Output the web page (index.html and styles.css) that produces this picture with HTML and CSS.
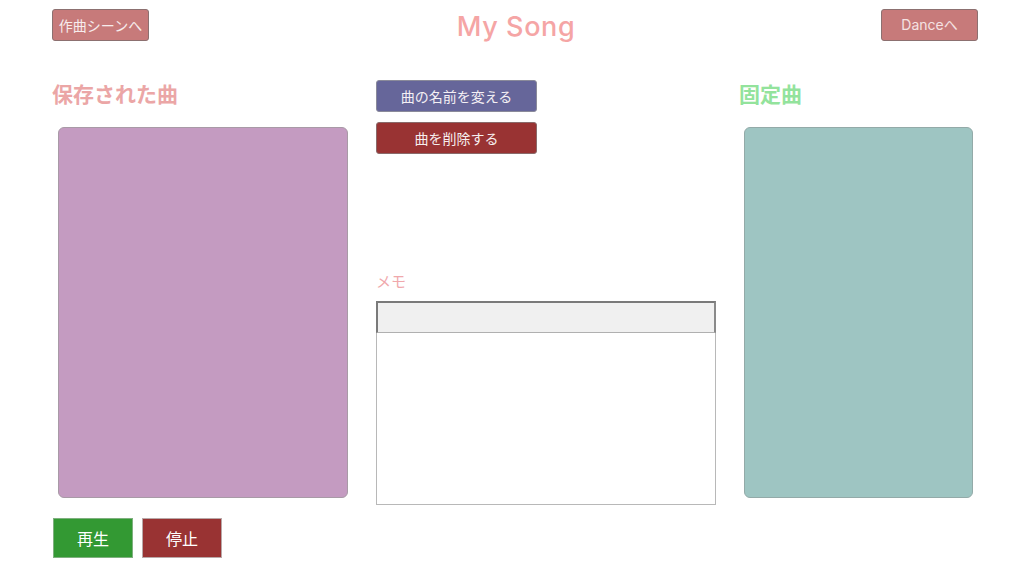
FILE: index.html
```html
<!DOCTYPE html>
<html lang="ja">
<head>
<meta charset="utf-8">
<title>My Song</title>
<link rel="stylesheet" href="styles.css">
</head>
<body>
<header class="topbar">
  <div class="topbar-left"><button class="nav-btn">作曲シーンへ</button></div>
  <h1 class="title">My Song</h1>
  <div class="topbar-right"><button class="nav-btn nav-latin">Danceへ</button></div>
</header>
<main class="layout">
  <section class="col col-saved">
    <h2 class="heading heading-pink">保存された曲</h2>
    <div class="panel panel-purple"></div>
    <div class="player">
      <button class="play-btn play">再生</button>
      <button class="play-btn stop">停止</button>
    </div>
  </section>
  <section class="col col-middle">
    <button class="action-btn rename">曲の名前を変える</button>
    <button class="action-btn delete">曲を削除する</button>
    <label class="memo-label">メモ</label>
    <input class="memo-input" type="text">
    <textarea class="memo-text"></textarea>
  </section>
  <section class="col col-fixed">
    <h2 class="heading heading-green">固定曲</h2>
    <div class="panel panel-teal"></div>
  </section>
</main>
</body>
</html>
```
FILE: styles.css
```css
* { box-sizing: border-box; }
html, body { margin: 0; padding: 0; background: #fff; }
body {
  font-family: "Noto Sans CJK JP", "Noto Sans", sans-serif;
  width: 1024px;
  height: 573px;
  overflow: hidden;
}
.topbar {
  display: grid;
  grid-template-columns: 1fr auto 1fr;
  align-items: start;
  padding: 9px 46px 0 52px;
  height: 41px;
}
.topbar-right { display: flex; justify-content: flex-end; }
.nav-btn {
  font-family: inherit;
  font-size: 14px;
  color: #f7ecec;
  background: #c77a7a;
  border: 1px solid #8c7070;
  border-radius: 3px;
  height: 32px;
  width: 97px;
  padding: 0;
  line-height: 30px;
}
.nav-latin { font-family: Inter, "Noto Sans CJK JP", sans-serif; font-size: 14px; color: #f5e2e2; }
.title {
  margin: 0;
  margin-left: 2px;
  font-family: Inter, "Noto Sans", sans-serif;
  font-size: 27px;
  font-weight: 500;
  color: #f5a5a5;
  line-height: 34px;
  margin-top: 1px;
  letter-spacing: 0.6px;
}
.layout {
  display: grid;
  grid-template-columns: 324px 363px 238px;
  padding-left: 52px;
  padding-top: 39px;
}
.col { display: flex; flex-direction: column; align-items: flex-start; }
.heading {
  margin: 1px 0 0 0;
  font-size: 21px;
  font-weight: 700;
  line-height: 24px;
}
.heading-pink { color: #eba6a6; }
.heading-green { color: #93e39c; }
.panel {
  border: 1px solid #a89aa6;
  border-radius: 6px;
  height: 371px;
  margin-top: 22px;
}
.panel-purple { background: #c49bc1; width: 290px; margin-left: 6px; }
.panel-teal { background: #9ec5c2; width: 229px; margin-left: 5px; border-color: #93aaa8; }
.player { display: flex; gap: 9px; margin-top: 20px; margin-left: 1px; }
.play-btn {
  font-family: inherit;
  font-size: 16px;
  color: #fff;
  width: 80px;
  height: 40px;
  border: 1px solid #b9a9a9;
  padding: 0;
}
.play { background: #339933; border-color: #7fb07f; }
.stop { background: #993333; }
.action-btn {
  font-family: inherit;
  font-size: 14px;
  color: #f4f0f4;
  width: 161px;
  height: 32px;
  border: 1px solid #8a8a9a;
  border-radius: 3px;
  padding: 0;
}
.rename { background: #66669a; }
.delete { background: #993333; margin-top: 10px; border-color: #8a6a6a; color: #f6eeee; }
.memo-label {
  margin-top: 116px;
  font-size: 15px;
  color: #f0a8ac;
  line-height: 22px;
}
.memo-input {
  margin-top: 9px;
  width: 340px;
  height: 32px;
  background: #f0f0f0;
  border-style: solid;
  border-width: 2px 2px 1px 2px;
  border-color: #7a7a7a #8a8a8a #b0b0b0 #7a7a7a;
  padding: 0 4px;
  font-family: inherit;
}
.memo-text {
  width: 340px;
  height: 172px;
  border: 1px solid #b8b8b8;
  border-top: none;
  resize: none;
  margin: 0;
  font-family: inherit;
}
```
